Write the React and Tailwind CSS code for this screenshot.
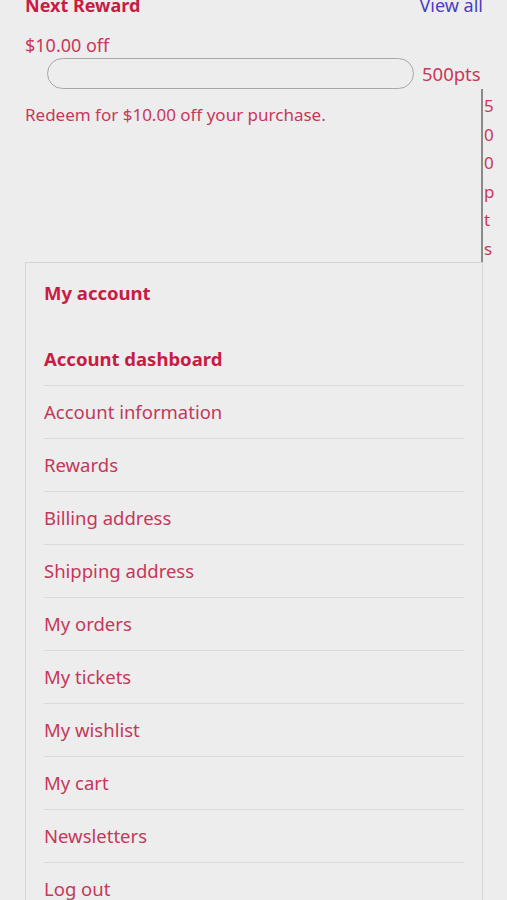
import React from "react";

const items = [
  "Account information",
  "Rewards",
  "Billing address",
  "Shipping address",
  "My orders",
  "My tickets",
  "My wishlist",
  "My cart",
  "Newsletters",
  "Log out",
];

export default function App() {
  return (
    <div
      className="min-h-[900px] h-[900px] overflow-hidden bg-[#ededed]"
      style={{ fontFamily: '"Noto Sans", "Open Sans", sans-serif' }}
    >
      <div className="pl-[25px] pr-[24px]">
        <div className="-mt-[8px] flex justify-between items-center h-[26px]">
          <span className="text-[18px] font-bold text-[#c81c44]">Next Reward</span>
          <span className="text-[18px] text-[#4a3dc2]">View all</span>
        </div>
        <div className="mt-[15px] h-[24px] flex items-center text-[18px] text-[#c8385a]">
          $10.00 off
        </div>
        <div className="mt-[1px] flex items-center">
          <div className="ml-[22px] w-[367px] h-[31px] rounded-full border-[1.5px] border-[#a8a8a8]" />
          <span className="ml-[8px] text-[18.5px] text-[#c8385a] whitespace-nowrap">500pts</span>
        </div>
        <div className="flex">
          <div className="flex-1 pt-[14px] text-[17px] text-[#c8385a] leading-[24px] whitespace-nowrap">
            Redeem for $10.00 off your purchase.
          </div>
          <div className="w-[12px] mr-[-10px] h-[173px] border-l-2 border-[#8a8a8a] pl-[1px] pt-[3px] text-[17px] leading-[28.5px] text-[#c8385a] flex flex-col">
            <span>5</span>
            <span>0</span>
            <span>0</span>
            <span>p</span>
            <span>t</span>
            <span>s</span>
          </div>
        </div>
        <div className="border border-[#d6d6d6] pl-[18px] pr-[18px]">
          <div className="h-[70px] pt-[18px]">
            <span className="text-[18.5px] font-bold leading-[24px] text-[#c81c44]">My account</span>
          </div>
          <div className="h-[53px] flex items-center border-b border-[#dadada] text-[18.5px] font-bold text-[#c81c44]">
            Account dashboard
          </div>
          {items.map((t) => (
            <div
              key={t}
              className="h-[53px] flex items-center border-b border-[#dadada] text-[18.5px] text-[#c4385a]"
            >
              {t}
            </div>
          ))}
        </div>
      </div>
    </div>
  );
}
